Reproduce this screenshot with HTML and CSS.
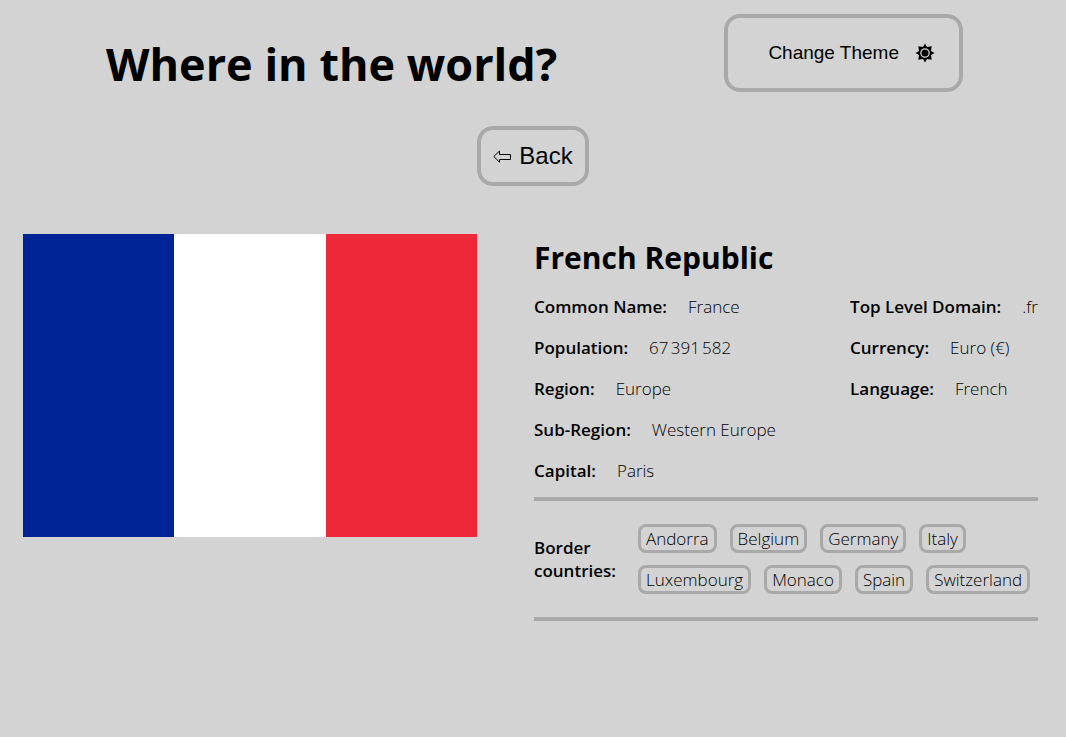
FILE: index.html
```html
<!DOCTYPE html>
<html lang="en">
<head>
<meta charset="utf-8">
<meta name="viewport" content="width=device-width, initial-scale=1">
<title>Where in the world?</title>
<link rel="stylesheet" href="styles.css">
</head>
<body>
<header class="header">
  <h1 class="title">Where in the world?</h1>
  <button class="theme-button" type="button">Change Theme
    <svg class="sun" viewBox="0 0 20 20" aria-hidden="true">
      <path fill-rule="evenodd" d="M10 .5 12 4 16.7 3.3 16 8 19.5 10 16 12 16.7 16.7 12 16 10 19.5 8 16 3.3 16.7 4 12 .5 10 4 8 3.3 3.3 8 4ZM10 5.200A4.800 4.800 0 1 0 10 14.800A4.800 4.800 0 1 0 10 5.200Z"/>
      <circle cx="10" cy="10" r="3.500"/>
    </svg>
  </button>
</header>
<nav class="back-row">
  <button class="back-button" type="button">
    <svg class="arrow" viewBox="0 0 18 14" aria-hidden="true"><path d="M.8 7.500 6.500 2V5.500H17.500V10.500H6.500V13.200Z"/></svg>
    Back
  </button>
</nav>
<main class="country">
  <svg class="flag" viewBox="0 0 3 2" preserveAspectRatio="none" role="img" aria-label="Flag of France">
    <path fill="#ed2939" d="M2 0h1v2H2z"/><path fill="#fff" d="M1 0h1v2H1z"/><path fill="#002395" d="M0 0h1v2H0z"/>
  </svg>
  <section class="details">
    <h2 class="name">French Republic</h2>
    <div class="facts">
      <dl class="fact-list">
        <div class="fact"><dt>Common Name:</dt><dd>France</dd></div>
        <div class="fact"><dt>Population:</dt><dd>67&#8239;391&#8239;582</dd></div>
        <div class="fact"><dt>Region:</dt><dd>Europe</dd></div>
        <div class="fact"><dt>Sub-Region:</dt><dd>Western Europe</dd></div>
        <div class="fact"><dt>Capital:</dt><dd>Paris</dd></div>
      </dl>
      <dl class="fact-list">
        <div class="fact"><dt>Top Level Domain:</dt><dd>.fr</dd></div>
        <div class="fact"><dt>Currency:</dt><dd>Euro (€)</dd></div>
        <div class="fact"><dt>Language:</dt><dd>French</dd></div>
      </dl>
    </div>
    <div class="borders">
      <h3 class="borders-title">Border countries:</h3>
      <div class="chips">
        <button class="chip" type="button">Andorra</button>
        <button class="chip" type="button">Belgium</button>
        <button class="chip" type="button">Germany</button>
        <button class="chip" type="button">Italy</button>
        <button class="chip" type="button">Luxembourg</button>
        <button class="chip" type="button">Monaco</button>
        <button class="chip" type="button">Spain</button>
        <button class="chip" type="button">Switzerland</button>
      </div>
    </div>
  </section>
</main>
</body>
</html>
```
FILE: styles.css
```css
* { box-sizing: border-box; }

body {
  margin: 0;
  background: #d3d3d3;
  color: #000;
  font-family: "Segoe UI", "Open Sans", "Noto Sans", sans-serif;
  font-size: 17px;
  line-height: 24px;
}

.header {
  display: flex;
  align-items: flex-start;
  justify-content: space-between;
  padding: 14px 103px 0 106px;
}

.title {
  margin: 18px 0 0;
  font-size: 45px;
  font-weight: 700;
  line-height: 64px;
}

.theme-button,
.back-button,
.chip {
  border: 4px solid #a9a9a9;
  background: transparent;
  color: #000;
  cursor: pointer;
}

.theme-button {
  display: flex;
  align-items: center;
  gap: 16px;
  padding: 23px 24px 23px 40px;
  border-radius: 16px;
  font: 19px/24px "Liberation Sans", Arial, sans-serif;
}

.sun { width: 20px; height: 20px; }

.back-row {
  display: flex;
  justify-content: center;
  padding-top: 30px;
}

.back-button {
  display: flex;
  align-items: center;
  gap: 8px;
  padding: 12px;
  border-radius: 16px;
  font: 24px/28px "Liberation Sans", Arial, sans-serif;
}

.arrow {
  width: 18px;
  height: 14px;
  fill: none;
  stroke: #000;
}

.country {
  display: grid;
  grid-template-columns: 454fr 504fr;
  align-items: start;
  gap: 57px;
  padding: 48px 28px 24px 23px;
}

.flag {
  display: block;
  width: 100%;
  aspect-ratio: 3 / 2;
  shape-rendering: crispEdges;
}

.name {
  margin: 0 0 13px;
  font-size: 30px;
  font-weight: 700;
  line-height: 48px;
}

.facts {
  display: flex;
  justify-content: space-between;
  padding-bottom: 14px;
}

.fact-list {
  display: flex;
  flex-direction: column;
  gap: 17px;
  margin: 0;
}

.fact { display: flex; gap: 21px; }

.fact dt { font-weight: 650; }

.fact dd { margin: 0; font-weight: 300; }

.borders {
  display: flex;
  align-items: center;
  gap: 20px;
  padding: 23px 0;
  border: solid #a9a9a9;
  border-width: 4px 0;
}

.borders-title {
  flex: 0 0 84px;
  margin: 0;
  font-size: 17px;
  font-weight: 650;
  line-height: 23px;
}

.chips {
  display: flex;
  flex: 1;
  flex-wrap: wrap;
  gap: 12px 13px;
}

.chip {
  padding: 0 5px;
  border-width: 3px;
  border-radius: 8px;
  font: 300 17px/23px "Segoe UI", "Open Sans", "Noto Sans", sans-serif;
}
```
